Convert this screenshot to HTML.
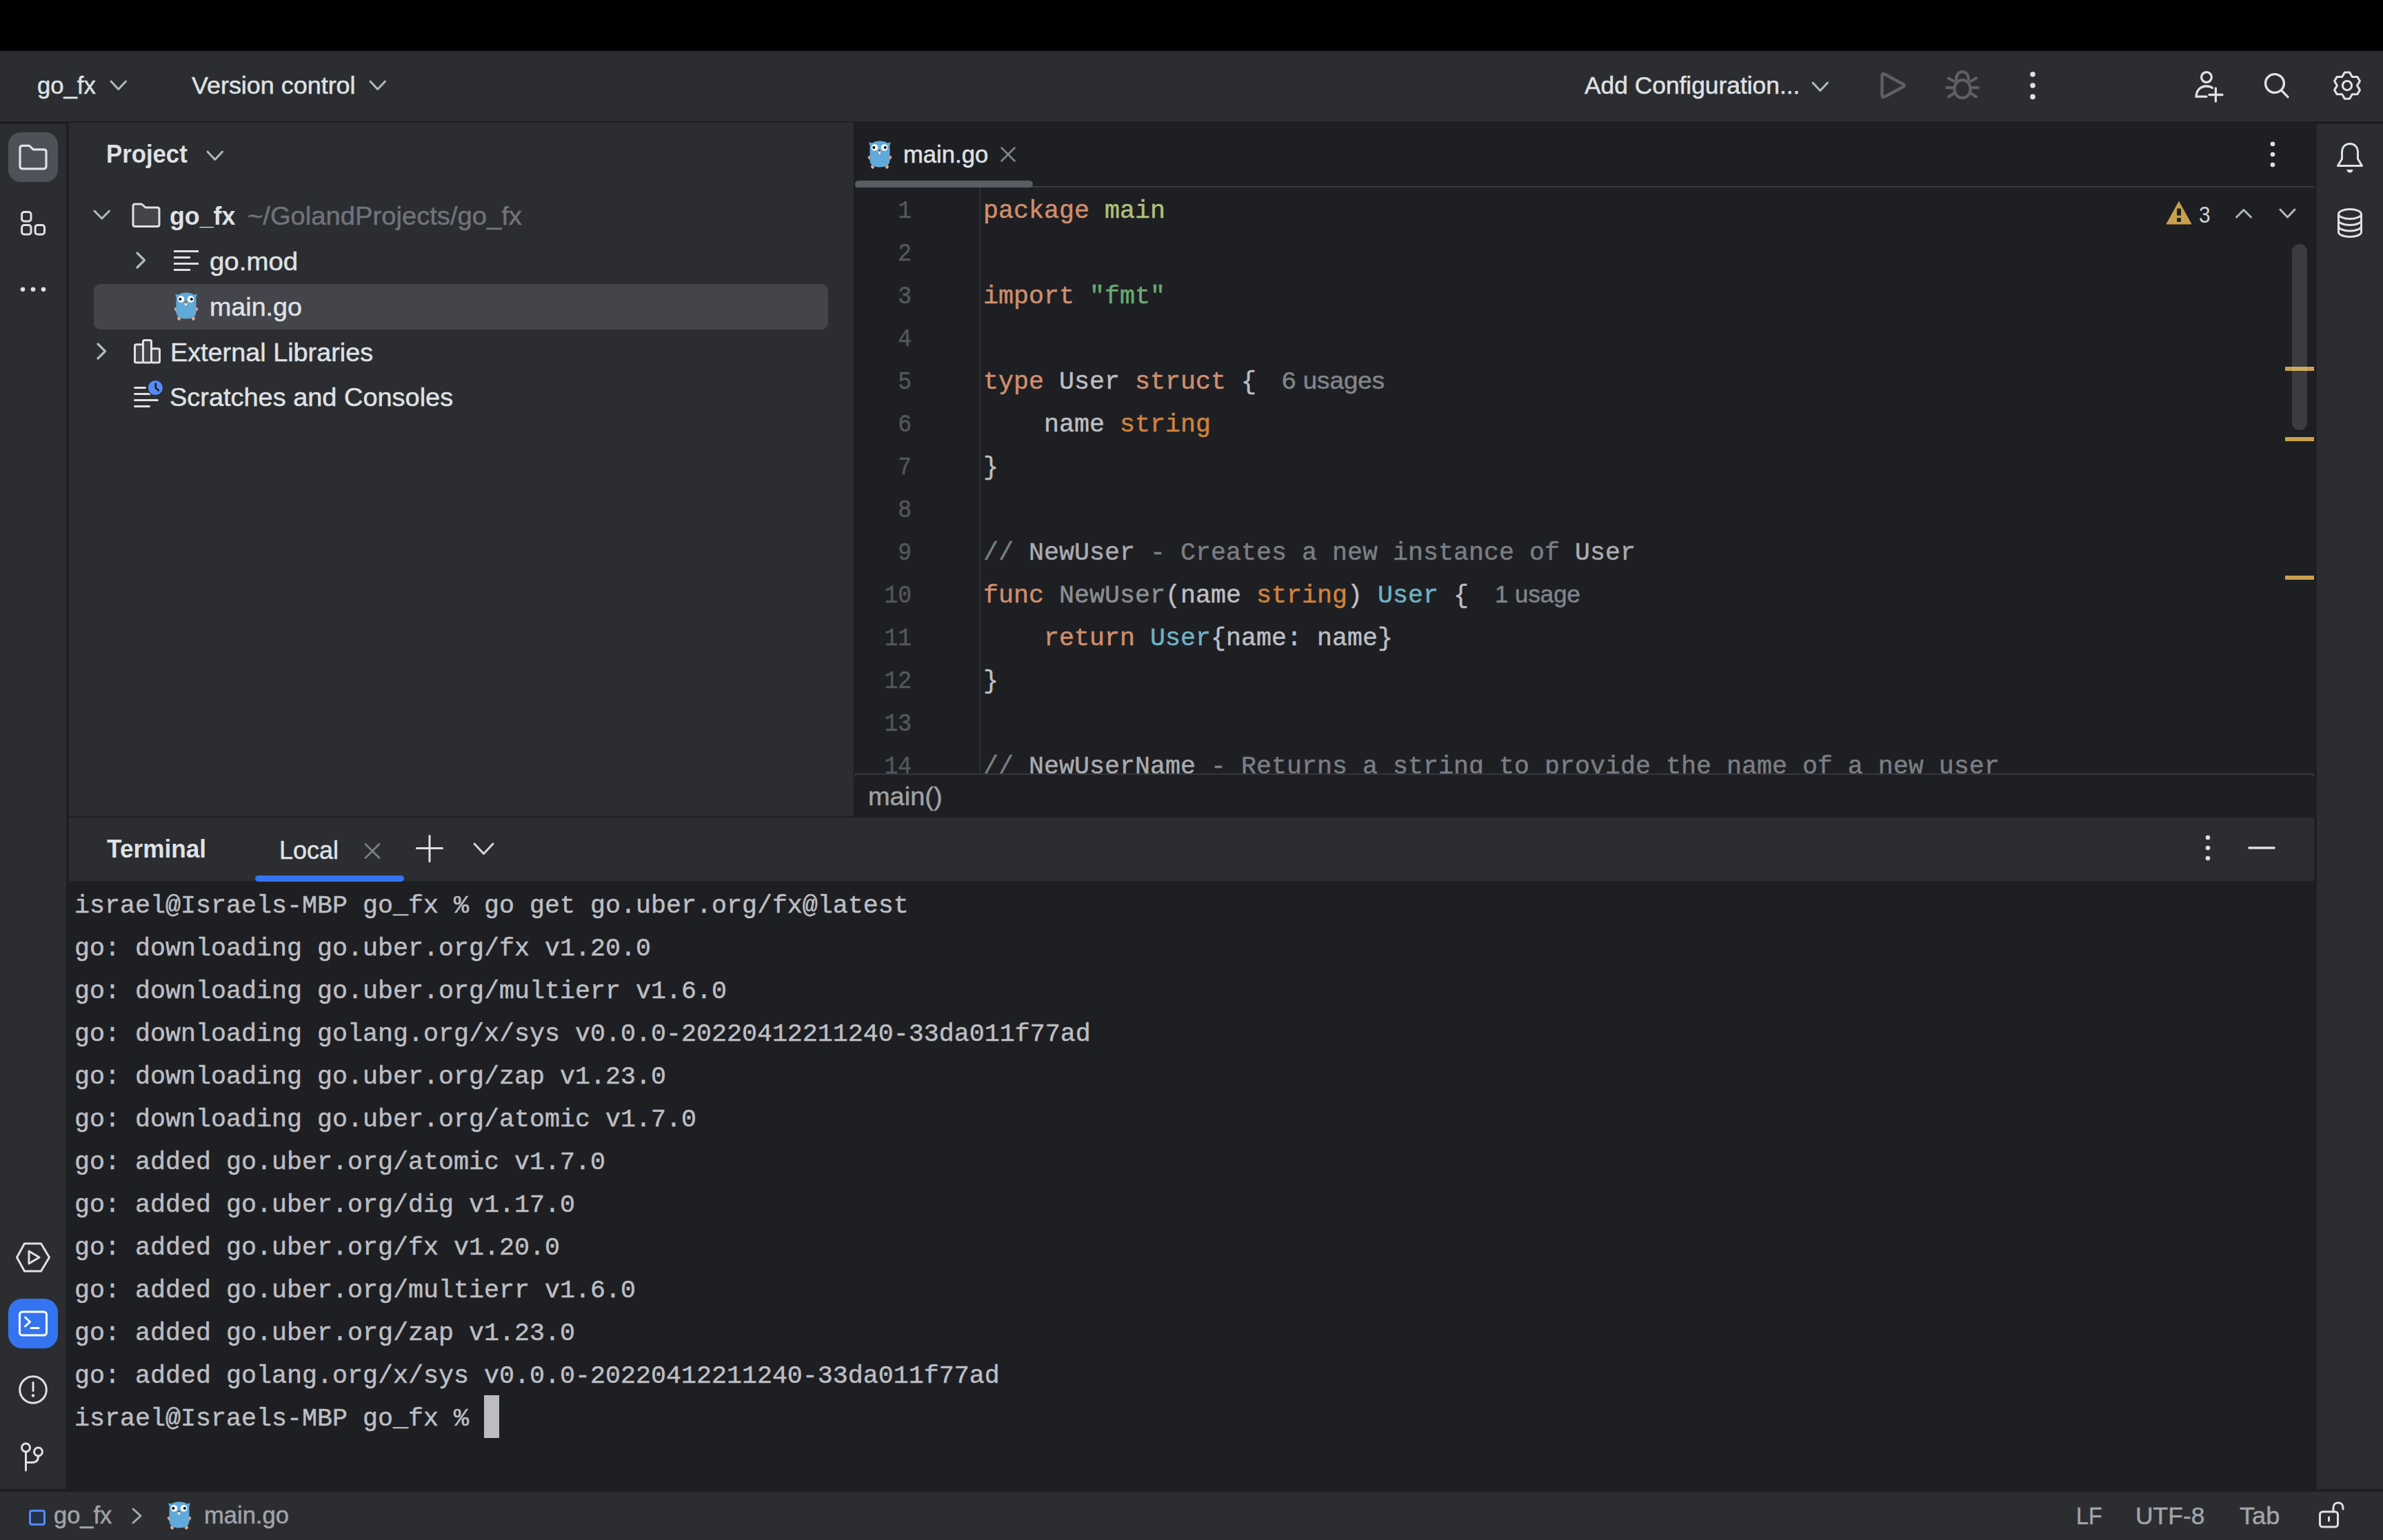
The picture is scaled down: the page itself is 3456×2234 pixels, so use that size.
<!DOCTYPE html><html><head><meta charset="utf-8"><style>
html,body{margin:0;padding:0;width:3456px;height:2234px;overflow:hidden;background:#1E1F22;}
div{box-sizing:border-box;-webkit-text-stroke:0.5px currentColor;}
.nb{-webkit-text-stroke:0;}
</style></head><body>
<div style="position:absolute;left:0px;top:0px;width:3456px;height:74px;background:#000000;border-radius:0px;"></div>
<div style="position:absolute;left:0px;top:74px;width:3456px;height:102px;background:#2B2D30;border-radius:0px;"></div>
<div style="position:absolute;left:0px;top:180px;width:96px;height:1980px;background:#2B2D30;border-radius:0px;"></div>
<div style="position:absolute;left:100px;top:178px;width:1138px;height:1006px;background:#2B2D30;border-radius:0px;"></div>
<div style="position:absolute;left:100px;top:1186px;width:3256px;height:92px;background:#2B2D30;border-radius:0px;"></div>
<div style="position:absolute;left:3360px;top:180px;width:96px;height:1980px;background:#2B2D30;border-radius:0px;"></div>
<div style="position:absolute;left:0px;top:2164px;width:3456px;height:70px;background:#2B2D30;border-radius:0px;"></div>
<div style="position:absolute;left:53.91px;top:93.1px;font-family:'Liberation Sans', sans-serif;font-size:35px;font-weight:normal;line-height:62px;color:#DFE1E5;white-space:pre;transform:scaleX(0.9893);transform-origin:0 0;">go_fx</div>
<svg style="position:absolute;left:157px;top:114px" width="29" height="19" viewBox="0 0 29 19" fill="none"><polyline points="4,4 14.75,15.5 25.5,4" stroke="#B4B8BF" stroke-width="3" stroke-linecap="round" stroke-linejoin="round"/></svg>
<div style="position:absolute;left:278.0px;top:93.1px;font-family:'Liberation Sans', sans-serif;font-size:35px;font-weight:normal;line-height:62px;color:#DFE1E5;white-space:pre;transform:scaleX(1.0261);transform-origin:0 0;">Version control</div>
<svg style="position:absolute;left:533px;top:114px" width="29" height="19" viewBox="0 0 29 19" fill="none"><polyline points="4,4 14.75,15.5 25.5,4" stroke="#B4B8BF" stroke-width="3" stroke-linecap="round" stroke-linejoin="round"/></svg>
<div style="position:absolute;left:2298.0px;top:93.1px;font-family:'Liberation Sans', sans-serif;font-size:35px;font-weight:normal;line-height:62px;color:#DFE1E5;white-space:pre;transform:scaleX(1.0098);transform-origin:0 0;">Add Configuration...</div>
<svg style="position:absolute;left:2625px;top:116px" width="29" height="19" viewBox="0 0 29 19" fill="none"><polyline points="4,4 14.75,15.5 25.5,4" stroke="#B4B8BF" stroke-width="3" stroke-linecap="round" stroke-linejoin="round"/></svg>
<svg style="position:absolute;left:2720px;top:98px" width="50" height="52" viewBox="0 0 50 52" fill="none"><path d="M9.5 12 Q9.5 7.5 13.5 9.8 L40 24 Q43.5 26 40 28 L13.5 42.2 Q9.5 44.5 9.5 40 Z" stroke="#5F6064" stroke-width="4.4" stroke-linejoin="round"/></svg>
<svg style="position:absolute;left:2818px;top:98px" width="56" height="52" viewBox="0 0 56 52" fill="none"><g stroke="#5F6064" stroke-width="4.2" stroke-linecap="round" fill="none">
<ellipse cx="28" cy="31.1" rx="11.7" ry="13"/>
<path d="M19 18 C19 10 23 6.2 28 6.2 C33 6.2 37 10 37 18"/>
<line x1="15.4" y1="19.8" x2="7.9" y2="15.4"/><line x1="40.6" y1="19.8" x2="48.1" y2="15.4"/>
<line x1="14.2" y1="29.2" x2="5.4" y2="29.2"/><line x1="41.8" y1="29.2" x2="50.6" y2="29.2"/>
<line x1="15.4" y1="37.4" x2="7.9" y2="42.4"/><line x1="40.6" y1="37.4" x2="48.1" y2="42.4"/>
</g></svg>
<svg style="position:absolute;left:2938px;top:98px" width="20" height="52" viewBox="0 0 20 52" fill="none"><circle cx="10" cy="9.7" r="3.8" fill="#DFE1E5"/><circle cx="10" cy="26" r="3.8" fill="#DFE1E5"/><circle cx="10" cy="42.4" r="3.8" fill="#DFE1E5"/></svg>
<svg style="position:absolute;left:3176px;top:98px" width="52" height="52" viewBox="0 0 52 52" fill="none"><g stroke="#DFE1E5" stroke-width="3.3" stroke-linecap="round" fill="none">
<circle cx="24" cy="14" r="7.4"/>
<path d="M24 42.2 L9.2 42.2 C9.2 33 15.5 27 24 27 C28 27 30.5 28 32.5 29.5"/>
<line x1="37.4" y1="30" x2="37.4" y2="49"/><line x1="28" y1="39.5" x2="47" y2="39.5"/>
</g></svg>
<svg style="position:absolute;left:3276px;top:98px" width="52" height="52" viewBox="0 0 52 52" fill="none"><g stroke="#DFE1E5" stroke-width="3.4" stroke-linecap="round" fill="none">
<circle cx="23" cy="23" r="13.4"/><line x1="33.2" y1="33.6" x2="42" y2="42.6"/>
</g></svg>
<svg style="position:absolute;left:3376px;top:98px" width="56" height="54" viewBox="0 0 56 54" fill="none"><g stroke="#DFE1E5" stroke-width="3.1" stroke-linejoin="round" fill="none">
<path d="M24.45 6.93 L31.55 6.93 L35.30 13.46 L42.83 13.44 L46.38 19.59 L42.60 26.10 L46.38 32.61 L42.83 38.76 L35.30 38.74 L31.55 45.27 L24.45 45.27 L20.70 38.74 L13.17 38.76 L9.62 32.61 L13.40 26.10 L9.62 19.59 L13.17 13.44 L20.70 13.46 Z"/>
<circle cx="28" cy="26.1" r="6.6"/>
</g></svg>
<div style="position:absolute;left:12px;top:192px;width:72px;height:72px;background:#4E5157;border-radius:18px;"></div>
<svg style="position:absolute;left:24px;top:206px" width="48" height="44" viewBox="0 0 48 44" fill="none"><path d="M5 8.8 C5 6.5 6 5.3 8.5 5.3 L18.5 5.3 L24.2 10.9 L39.5 10.9 C42 10.9 43 12 43 14.3 L43 35.3 C43 37.8 42 38.8 39.5 38.8 L8.5 38.8 C6 38.8 5 37.8 5 35.3 Z" stroke="#DFE1E5" stroke-width="3.2" stroke-linejoin="round"/></svg>
<svg style="position:absolute;left:24px;top:300px" width="48" height="48" viewBox="0 0 48 48" fill="none"><g stroke="#DFE1E5" stroke-width="3" fill="none">
<rect x="7.6" y="7.5" width="13.4" height="13.4" rx="3.5"/>
<rect x="7.6" y="26.5" width="13.4" height="13.4" rx="3.5"/>
<rect x="27.1" y="26.5" width="13.4" height="13.4" rx="3.5"/>
</g></svg>
<svg style="position:absolute;left:24px;top:410px" width="48" height="20" viewBox="0 0 48 20" fill="none"><circle cx="9" cy="9.8" r="3.3" fill="#DFE1E5"/><circle cx="24" cy="9.8" r="3.3" fill="#DFE1E5"/><circle cx="39" cy="9.8" r="3.3" fill="#DFE1E5"/></svg>
<svg style="position:absolute;left:20px;top:1798px" width="56" height="52" viewBox="0 0 56 52" fill="none"><g stroke="#DFE1E5" stroke-width="3" stroke-linejoin="round" fill="none">
<path d="M15.5 6 L39.5 6 L51.5 26 L39.5 46 L15.5 46 L4.5 26 Z"/>
<path d="M22 17 L22 35 L37 26 Z"/>
</g></svg>
<div style="position:absolute;left:12px;top:1884px;width:72px;height:72px;background:#3574F0;border-radius:20px;"></div>
<svg style="position:absolute;left:24px;top:1896px" width="48" height="48" viewBox="0 0 48 48" fill="none"><g stroke="#FFFFFF" stroke-width="3" stroke-linecap="round" stroke-linejoin="round" fill="none">
<rect x="4.5" y="7" width="39" height="34" rx="4"/>
<polyline points="12.5,15 19.5,21.5 12.5,28"/>
<line x1="21" y1="30.5" x2="32" y2="30.5"/>
</g></svg>
<svg style="position:absolute;left:24px;top:1992px" width="48" height="48" viewBox="0 0 48 48" fill="none"><g stroke="#DFE1E5" stroke-width="3" stroke-linecap="round" fill="none">
<circle cx="24" cy="24" r="19.3"/><line x1="24" y1="13.5" x2="24" y2="25.5"/>
</g><circle cx="24" cy="32.5" r="2.2" fill="#DFE1E5"/></svg>
<svg style="position:absolute;left:24px;top:2088px" width="48" height="50" viewBox="0 0 48 50" fill="none"><g stroke="#DFE1E5" stroke-width="3" stroke-linecap="round" fill="none">
<circle cx="13.5" cy="12" r="6"/><circle cx="31.5" cy="18" r="6"/>
<line x1="13.5" y1="18" x2="13.5" y2="45"/>
<path d="M31.5 24 C31.5 30 29 33.5 23 33.5 L13.5 33.5"/>
</g></svg>
<div class="nb" style="position:absolute;left:153.54px;top:193px;font-family:'Liberation Sans', sans-serif;font-size:36px;font-weight:bold;line-height:62px;color:#DFE1E5;white-space:pre;transform:scaleX(0.9645);transform-origin:0 0;">Project</div>
<svg style="position:absolute;left:297px;top:216px" width="29" height="19" viewBox="0 0 29 19" fill="none"><polyline points="4,4 14.75,15.5 25.5,4" stroke="#B4B8BF" stroke-width="3" stroke-linecap="round" stroke-linejoin="round"/></svg>
<svg style="position:absolute;left:133px;top:302px" width="29" height="19" viewBox="0 0 29 19" fill="none"><polyline points="4,4 14.75,15 25.5,4" stroke="#B4B8BF" stroke-width="3" stroke-linecap="round" stroke-linejoin="round"/></svg>
<svg style="position:absolute;left:188px;top:290px" width="48" height="44" viewBox="0 0 48 44" fill="none"><path d="M5 9 C5 7 6 6 8 6 L17.5 6 L23 11 L40 11 C42 11 43 12 43 14 L43 35.5 C43 37.5 42 38.5 40 38.5 L8 38.5 C6 38.5 5 37.5 5 35.5 Z" fill="#43454A" stroke="#DFE1E5" stroke-width="3" stroke-linejoin="round"/></svg>
<div class="nb" style="position:absolute;left:245.63px;top:283.4px;font-family:'Liberation Sans', sans-serif;font-size:37px;font-weight:bold;line-height:62px;color:#DFE1E5;white-space:pre;transform:scaleX(0.9670);transform-origin:0 0;">go_fx</div>
<div style="position:absolute;left:359.47px;top:283.4px;font-family:'Liberation Sans', sans-serif;font-size:37px;font-weight:normal;line-height:62px;color:#6F737A;white-space:pre;transform:scaleX(1.0319);transform-origin:0 0;">~/GolandProjects/go_fx</div>
<svg style="position:absolute;left:195px;top:363px" width="18" height="29" viewBox="0 0 18 29" fill="none"><polyline points="4,4 14.5,14.5 4,25" stroke="#B4B8BF" stroke-width="3.2" stroke-linecap="round" stroke-linejoin="round"/></svg>
<svg style="position:absolute;left:248px;top:358px" width="44" height="40" viewBox="0 0 44 40" fill="none"><g stroke="#DFE1E5" stroke-width="3" fill="none">
<line x1="4" y1="6.5" x2="40" y2="6.5"/><line x1="4" y1="15.5" x2="28" y2="15.5"/>
<line x1="4" y1="24.5" x2="40" y2="24.5"/><line x1="4" y1="33.5" x2="28" y2="33.5"/>
</g></svg>
<div style="position:absolute;left:303.66px;top:349.1px;font-family:'Liberation Sans', sans-serif;font-size:37px;font-weight:normal;line-height:62px;color:#DFE1E5;white-space:pre;transform:scaleX(1.0380);transform-origin:0 0;">go.mod</div>
<div style="position:absolute;left:136px;top:412px;width:1065px;height:66px;background:#43454A;border-radius:10px;"></div>
<svg style="position:absolute;left:252px;top:424px" width="36" height="41" viewBox="0 0 36 41" fill="none"><g>
<path d="M2.2 2.6 L10.5 4.2 L4.5 11 Z" fill="#61A9D9"/>
<path d="M33.8 2.6 L25.5 4.2 L31.5 11 Z" fill="#61A9D9"/>
<ellipse cx="3.8" cy="25" rx="2.4" ry="3.4" transform="rotate(-45 3.8 25)" fill="#E2A98B"/>
<ellipse cx="32.2" cy="25" rx="2.4" ry="3.4" transform="rotate(45 32.2 25)" fill="#E2A98B"/>
<ellipse cx="7.5" cy="38" rx="2.2" ry="2.8" transform="rotate(-25 7.5 38)" fill="#E2A98B"/>
<ellipse cx="28.5" cy="38" rx="2.2" ry="2.8" transform="rotate(25 28.5 38)" fill="#E2A98B"/>
<path d="M3.5 12 C3.5 4 9.5 0.5 18 0.5 C26.5 0.5 32.5 4 32.5 12 L32.5 28 C32.5 35.5 27 38.5 18 38.5 C9 38.5 3.5 35.5 3.5 28 Z" fill="#61A9D9"/>
<circle cx="10.5" cy="10" r="4.8" fill="#fff"/><circle cx="24.6" cy="10" r="4.8" fill="#fff"/>
<circle cx="9.3" cy="10" r="2.1" fill="#000"/><circle cx="25.8" cy="10" r="2.1" fill="#000"/>
<ellipse cx="17.5" cy="15.3" rx="2.5" ry="1.7" fill="#E2A98B"/>
<ellipse cx="17.5" cy="14.3" rx="1.2" ry="0.9" fill="#000"/>
<rect x="16.2" y="16.4" width="2.6" height="2.8" fill="#fff"/>
</g></svg>
<div style="position:absolute;left:303.66px;top:415px;font-family:'Liberation Sans', sans-serif;font-size:37px;font-weight:normal;line-height:62px;color:#DFE1E5;white-space:pre;transform:scaleX(1.0178);transform-origin:0 0;">main.go</div>
<svg style="position:absolute;left:138px;top:495px" width="18" height="29" viewBox="0 0 18 29" fill="none"><polyline points="4,4 14.5,14.5 4,25" stroke="#B4B8BF" stroke-width="3.2" stroke-linecap="round" stroke-linejoin="round"/></svg>
<svg style="position:absolute;left:190px;top:488px" width="48" height="44" viewBox="0 0 48 44" fill="none"><g stroke="#DFE1E5" stroke-width="3" fill="#43454A" stroke-linejoin="round">
<rect x="5.5" y="11.8" width="12" height="26.2" rx="2"/>
<rect x="29.5" y="17.7" width="12" height="20.3" rx="2"/>
<rect x="17.5" y="5.5" width="12" height="32.5" rx="2"/>
</g></svg>
<div style="position:absolute;left:246.66px;top:481px;font-family:'Liberation Sans', sans-serif;font-size:37px;font-weight:normal;line-height:62px;color:#DFE1E5;white-space:pre;transform:scaleX(1.0214);transform-origin:0 0;">External Libraries</div>
<svg style="position:absolute;left:190px;top:548px" width="50" height="46" viewBox="0 0 50 46" fill="none"><g stroke="#DFE1E5" stroke-width="3" stroke-linecap="round" fill="none">
<line x1="5.5" y1="14.5" x2="20.5" y2="14.5"/><line x1="5.5" y1="23.6" x2="28" y2="23.6"/>
<line x1="5.5" y1="32.5" x2="38.4" y2="32.5"/><line x1="5.5" y1="41.5" x2="26.5" y2="41.5"/>
</g>
<circle cx="35.4" cy="14.5" r="12" fill="#2B2D30"/>
<circle cx="35.4" cy="14.5" r="10.5" fill="#548AF7"/>
<path d="M35.8 8.5 L35.8 14.8 L39.8 18.3" stroke="#1E1F22" stroke-width="2.6" stroke-linecap="round" fill="none"/></svg>
<div style="position:absolute;left:246.47px;top:546px;font-family:'Liberation Sans', sans-serif;font-size:37px;font-weight:normal;line-height:62px;color:#DFE1E5;white-space:pre;transform:scaleX(1.0251);transform-origin:0 0;">Scratches and Consoles</div>
<svg style="position:absolute;left:1258px;top:204px" width="36" height="41" viewBox="0 0 36 41" fill="none"><g>
<path d="M2.2 2.6 L10.5 4.2 L4.5 11 Z" fill="#61A9D9"/>
<path d="M33.8 2.6 L25.5 4.2 L31.5 11 Z" fill="#61A9D9"/>
<ellipse cx="3.8" cy="25" rx="2.4" ry="3.4" transform="rotate(-45 3.8 25)" fill="#E2A98B"/>
<ellipse cx="32.2" cy="25" rx="2.4" ry="3.4" transform="rotate(45 32.2 25)" fill="#E2A98B"/>
<ellipse cx="7.5" cy="38" rx="2.2" ry="2.8" transform="rotate(-25 7.5 38)" fill="#E2A98B"/>
<ellipse cx="28.5" cy="38" rx="2.2" ry="2.8" transform="rotate(25 28.5 38)" fill="#E2A98B"/>
<path d="M3.5 12 C3.5 4 9.5 0.5 18 0.5 C26.5 0.5 32.5 4 32.5 12 L32.5 28 C32.5 35.5 27 38.5 18 38.5 C9 38.5 3.5 35.5 3.5 28 Z" fill="#61A9D9"/>
<circle cx="10.5" cy="10" r="4.8" fill="#fff"/><circle cx="24.6" cy="10" r="4.8" fill="#fff"/>
<circle cx="9.3" cy="10" r="2.1" fill="#000"/><circle cx="25.8" cy="10" r="2.1" fill="#000"/>
<ellipse cx="17.5" cy="15.3" rx="2.5" ry="1.7" fill="#E2A98B"/>
<ellipse cx="17.5" cy="14.3" rx="1.2" ry="0.9" fill="#000"/>
<rect x="16.2" y="16.4" width="2.6" height="2.8" fill="#fff"/>
</g></svg>
<div style="position:absolute;left:1309.77px;top:193.1px;font-family:'Liberation Sans', sans-serif;font-size:35px;font-weight:normal;line-height:62px;color:#DFE1E5;white-space:pre;transform:scaleX(0.9889);transform-origin:0 0;">main.go</div>
<svg style="position:absolute;left:1446px;top:208px" width="32" height="32" viewBox="0 0 32 32" fill="none"><g stroke="#7F838A" stroke-width="2.7" stroke-linecap="round"><line x1="6.5" y1="6.5" x2="25.5" y2="25.5"/><line x1="25.5" y1="6.5" x2="6.5" y2="25.5"/></g></svg>
<div style="position:absolute;left:1240px;top:270px;width:2116px;height:2px;background:#393B40;border-radius:0px;"></div>
<div style="position:absolute;left:1240px;top:262px;width:258px;height:10px;background:#5A5D63;border-radius:5px;"></div>
<svg style="position:absolute;left:3276px;top:198px" width="40" height="52" viewBox="0 0 40 52" fill="none"><circle cx="20" cy="10.9" r="3.3" fill="#DFE1E5"/><circle cx="20" cy="26" r="3.3" fill="#DFE1E5"/><circle cx="20" cy="41" r="3.3" fill="#DFE1E5"/></svg>
<div style="position:absolute;left:1420px;top:272px;width:2px;height:850px;background:#2C2E32;border-radius:0px;"></div>
<div style="position:absolute;left:1238px;top:272px;width:2070px;height:850px;overflow:hidden">
<div style="position:absolute;left:0px;top:3px;width:84px;text-align:right;font-family:'Liberation Mono', monospace;font-size:36.67px;line-height:62px;color:#53575E;white-space:pre;transform:scaleX(0.9);transform-origin:100% 0">1</div>
<div style="position:absolute;left:188px;top:3px;font-family:'Liberation Mono', monospace;font-size:36.67px;line-height:62px;white-space:pre"><span style="color:#CF8E6D">package</span><span style="color:#BCBEC4"> </span><span style="color:#AEC07C">main</span></div>
<div style="position:absolute;left:0px;top:65px;width:84px;text-align:right;font-family:'Liberation Mono', monospace;font-size:36.67px;line-height:62px;color:#53575E;white-space:pre;transform:scaleX(0.9);transform-origin:100% 0">2</div>
<div style="position:absolute;left:188px;top:65px;font-family:'Liberation Mono', monospace;font-size:36.67px;line-height:62px;white-space:pre"></div>
<div style="position:absolute;left:0px;top:127px;width:84px;text-align:right;font-family:'Liberation Mono', monospace;font-size:36.67px;line-height:62px;color:#53575E;white-space:pre;transform:scaleX(0.9);transform-origin:100% 0">3</div>
<div style="position:absolute;left:188px;top:127px;font-family:'Liberation Mono', monospace;font-size:36.67px;line-height:62px;white-space:pre"><span style="color:#CF8E6D">import</span><span style="color:#BCBEC4"> </span><span style="color:#6AAB73">&quot;fmt&quot;</span></div>
<div style="position:absolute;left:0px;top:189px;width:84px;text-align:right;font-family:'Liberation Mono', monospace;font-size:36.67px;line-height:62px;color:#53575E;white-space:pre;transform:scaleX(0.9);transform-origin:100% 0">4</div>
<div style="position:absolute;left:188px;top:189px;font-family:'Liberation Mono', monospace;font-size:36.67px;line-height:62px;white-space:pre"></div>
<div style="position:absolute;left:0px;top:251px;width:84px;text-align:right;font-family:'Liberation Mono', monospace;font-size:36.67px;line-height:62px;color:#53575E;white-space:pre;transform:scaleX(0.9);transform-origin:100% 0">5</div>
<div style="position:absolute;left:188px;top:251px;font-family:'Liberation Mono', monospace;font-size:36.67px;line-height:62px;white-space:pre"><span style="color:#CF8E6D">type</span><span style="color:#BCBEC4"> User </span><span style="color:#CF8E6D">struct</span><span style="color:#BCBEC4"> {</span></div>
<div style="position:absolute;left:0px;top:313px;width:84px;text-align:right;font-family:'Liberation Mono', monospace;font-size:36.67px;line-height:62px;color:#53575E;white-space:pre;transform:scaleX(0.9);transform-origin:100% 0">6</div>
<div style="position:absolute;left:188px;top:313px;font-family:'Liberation Mono', monospace;font-size:36.67px;line-height:62px;white-space:pre"><span style="color:#BCBEC4">    name </span><span style="color:#D0823E">string</span></div>
<div style="position:absolute;left:0px;top:375px;width:84px;text-align:right;font-family:'Liberation Mono', monospace;font-size:36.67px;line-height:62px;color:#53575E;white-space:pre;transform:scaleX(0.9);transform-origin:100% 0">7</div>
<div style="position:absolute;left:188px;top:375px;font-family:'Liberation Mono', monospace;font-size:36.67px;line-height:62px;white-space:pre"><span style="color:#BCBEC4">}</span></div>
<div style="position:absolute;left:0px;top:437px;width:84px;text-align:right;font-family:'Liberation Mono', monospace;font-size:36.67px;line-height:62px;color:#53575E;white-space:pre;transform:scaleX(0.9);transform-origin:100% 0">8</div>
<div style="position:absolute;left:188px;top:437px;font-family:'Liberation Mono', monospace;font-size:36.67px;line-height:62px;white-space:pre"></div>
<div style="position:absolute;left:0px;top:499px;width:84px;text-align:right;font-family:'Liberation Mono', monospace;font-size:36.67px;line-height:62px;color:#53575E;white-space:pre;transform:scaleX(0.9);transform-origin:100% 0">9</div>
<div style="position:absolute;left:188px;top:499px;font-family:'Liberation Mono', monospace;font-size:36.67px;line-height:62px;white-space:pre"><span style="color:#7A7E85">// </span><span style="color:#A9ABB0">NewUser</span><span style="color:#7A7E85"> - Creates a new instance of </span><span style="color:#A9ABB0">User</span></div>
<div style="position:absolute;left:0px;top:561px;width:84px;text-align:right;font-family:'Liberation Mono', monospace;font-size:36.67px;line-height:62px;color:#53575E;white-space:pre;transform:scaleX(0.9);transform-origin:100% 0">10</div>
<div style="position:absolute;left:188px;top:561px;font-family:'Liberation Mono', monospace;font-size:36.67px;line-height:62px;white-space:pre"><span style="color:#CF8E6D">func</span><span style="color:#BCBEC4"> </span><span style="color:#8C8F94">NewUser</span><span style="color:#BCBEC4">(name </span><span style="color:#D0823E">string</span><span style="color:#BCBEC4">) </span><span style="color:#6FB1C4">User</span><span style="color:#BCBEC4"> {</span></div>
<div style="position:absolute;left:0px;top:623px;width:84px;text-align:right;font-family:'Liberation Mono', monospace;font-size:36.67px;line-height:62px;color:#53575E;white-space:pre;transform:scaleX(0.9);transform-origin:100% 0">11</div>
<div style="position:absolute;left:188px;top:623px;font-family:'Liberation Mono', monospace;font-size:36.67px;line-height:62px;white-space:pre"><span style="color:#BCBEC4">    </span><span style="color:#CF8E6D">return</span><span style="color:#BCBEC4"> </span><span style="color:#6FB1C4">User</span><span style="color:#BCBEC4">{name: name}</span></div>
<div style="position:absolute;left:0px;top:685px;width:84px;text-align:right;font-family:'Liberation Mono', monospace;font-size:36.67px;line-height:62px;color:#53575E;white-space:pre;transform:scaleX(0.9);transform-origin:100% 0">12</div>
<div style="position:absolute;left:188px;top:685px;font-family:'Liberation Mono', monospace;font-size:36.67px;line-height:62px;white-space:pre"><span style="color:#BCBEC4">}</span></div>
<div style="position:absolute;left:0px;top:747px;width:84px;text-align:right;font-family:'Liberation Mono', monospace;font-size:36.67px;line-height:62px;color:#53575E;white-space:pre;transform:scaleX(0.9);transform-origin:100% 0">13</div>
<div style="position:absolute;left:188px;top:747px;font-family:'Liberation Mono', monospace;font-size:36.67px;line-height:62px;white-space:pre"></div>
<div style="position:absolute;left:0px;top:809px;width:84px;text-align:right;font-family:'Liberation Mono', monospace;font-size:36.67px;line-height:62px;color:#53575E;white-space:pre;transform:scaleX(0.9);transform-origin:100% 0">14</div>
<div style="position:absolute;left:188px;top:809px;font-family:'Liberation Mono', monospace;font-size:36.67px;line-height:62px;white-space:pre"><span style="color:#7A7E85">// </span><span style="color:#A9ABB0">NewUserName</span><span style="color:#7A7E85"> - Returns a string to provide the name of a new user</span></div>
</div>
<div style="position:absolute;left:1858.95px;top:521px;font-family:'Liberation Sans', sans-serif;font-size:35px;font-weight:normal;line-height:62px;color:#80848C;white-space:pre;transform:scaleX(1.0500);transform-origin:0 0;">6 usages</div>
<div style="position:absolute;left:2167.71px;top:831px;font-family:'Liberation Sans', sans-serif;font-size:35px;font-weight:normal;line-height:62px;color:#80848C;white-space:pre;transform:scaleX(0.9943);transform-origin:0 0;">1 usage</div>
<svg style="position:absolute;left:3138px;top:288px" width="44" height="40" viewBox="0 0 44 40" fill="none"><path d="M22 4.5 L40 37 L4 37 Z" fill="#C9A04B" stroke="#C9A04B" stroke-width="1" stroke-linejoin="round"/><rect x="19.1" y="14.5" width="5.9" height="10.1" fill="#1E1F22"/><rect x="19.1" y="28.1" width="5.9" height="5.8" fill="#1E1F22"/></svg>
<div class="nb" style="position:absolute;left:3188.99px;top:280.7px;font-family:'Liberation Sans', sans-serif;font-size:33px;font-weight:normal;line-height:62px;color:#CED0D6;white-space:pre;transform:scaleX(0.9059);transform-origin:0 0;">3</div>
<svg style="position:absolute;left:3238px;top:298px" width="32" height="24" viewBox="0 0 32 24" fill="none"><polyline points="5.5,17 16,6.5 26.5,17" stroke="#B4B8BF" stroke-width="3" stroke-linecap="round" stroke-linejoin="round"/></svg>
<svg style="position:absolute;left:3303px;top:300px" width="29" height="19" viewBox="0 0 29 19" fill="none"><polyline points="4,4 14.5,15 25,4" stroke="#B4B8BF" stroke-width="3" stroke-linecap="round" stroke-linejoin="round"/></svg>
<div style="position:absolute;left:3314px;top:532px;width:42px;height:6px;background:#C9A04B;border-radius:0px;"></div>
<div style="position:absolute;left:3314px;top:634px;width:42px;height:6px;background:#C9A04B;border-radius:0px;"></div>
<div style="position:absolute;left:3314px;top:835px;width:42px;height:6px;background:#C9A04B;border-radius:0px;"></div>
<div style="position:absolute;left:3324px;top:354px;width:22px;height:270px;background:rgba(255,255,255,0.135);border-radius:11px;"></div>
<div style="position:absolute;left:1240px;top:1122px;width:2116px;height:2px;background:#35373C;border-radius:0px;"></div>
<div style="position:absolute;left:1240px;top:1122px;width:2px;height:4px;background:#35373C;border-radius:0px;"></div>
<div style="position:absolute;left:3354px;top:1122px;width:2px;height:4px;background:#35373C;border-radius:0px;"></div>
<div style="position:absolute;left:1259.49px;top:1125px;font-family:'Liberation Sans', sans-serif;font-size:36px;font-weight:normal;line-height:62px;color:#9FA2A8;white-space:pre;transform:scaleX(1.0545);transform-origin:0 0;">main()</div>
<div class="nb" style="position:absolute;left:154.8px;top:1201.3px;font-family:'Liberation Sans', sans-serif;font-size:36px;font-weight:bold;line-height:62px;color:#DFE1E5;white-space:pre;transform:scaleX(0.9781);transform-origin:0 0;">Terminal</div>
<div style="position:absolute;left:405.0px;top:1202.5px;font-family:'Liberation Sans', sans-serif;font-size:36px;font-weight:normal;line-height:62px;color:#DFE1E5;white-space:pre;transform:scaleX(1.0000);transform-origin:0 0;">Local</div>
<svg style="position:absolute;left:524px;top:1218px" width="32" height="32" viewBox="0 0 32 32" fill="none"><g stroke="#7A7E85" stroke-width="2.8" stroke-linecap="round"><line x1="6" y1="6.5" x2="26" y2="26.5"/><line x1="26" y1="6.5" x2="6" y2="26.5"/></g></svg>
<div style="position:absolute;left:370px;top:1270px;width:216px;height:9px;background:#3574F0;border-radius:4.5px;"></div>
<svg style="position:absolute;left:599px;top:1207px" width="48" height="48" viewBox="0 0 48 48" fill="none"><g stroke="#DFE1E5" stroke-width="3" stroke-linecap="round"><line x1="24" y1="5.5" x2="24" y2="42.5"/><line x1="5.5" y1="23.5" x2="42.5" y2="23.5"/></g></svg>
<svg style="position:absolute;left:684px;top:1220px" width="35" height="22" viewBox="0 0 35 22" fill="none"><polyline points="4,4 17.5,18.5 31,4" stroke="#D5D7DB" stroke-width="3" stroke-linecap="round" stroke-linejoin="round"/></svg>
<svg style="position:absolute;left:3188px;top:1204px" width="28" height="52" viewBox="0 0 28 52" fill="none"><circle cx="14" cy="11" r="3.3" fill="#DFE1E5"/><circle cx="14" cy="26" r="3.3" fill="#DFE1E5"/><circle cx="14" cy="41" r="3.3" fill="#DFE1E5"/></svg>
<svg style="position:absolute;left:3252px;top:1220px" width="56" height="20" viewBox="0 0 56 20" fill="none"><line x1="10" y1="10" x2="46" y2="10" stroke="#DFE1E5" stroke-width="3.6" stroke-linecap="round"/></svg>
<div style="position:absolute;left:108px;top:1283px;font-family:'Liberation Mono', monospace;font-size:36.67px;line-height:62px;color:#BCBEC4;white-space:pre">israel@Israels-MBP go_fx % go get go.uber.org/fx@latest
go: downloading go.uber.org/fx v1.20.0
go: downloading go.uber.org/multierr v1.6.0
go: downloading golang.org/x/sys v0.0.0-20220412211240-33da011f77ad
go: downloading go.uber.org/zap v1.23.0
go: downloading go.uber.org/atomic v1.7.0
go: added go.uber.org/atomic v1.7.0
go: added go.uber.org/dig v1.17.0
go: added go.uber.org/fx v1.20.0
go: added go.uber.org/multierr v1.6.0
go: added go.uber.org/zap v1.23.0
go: added golang.org/x/sys v0.0.0-20220412211240-33da011f77ad
israel@Israels-MBP go_fx % </div>
<div style="position:absolute;left:702px;top:2024px;width:22px;height:62px;background:#BBBDC1;border-radius:0px;"></div>
<div style="position:absolute;left:42px;top:2190px;width:24px;height:23px;background:#25324D;border-radius:4px;border:3px solid #548AF7;"></div>
<div style="position:absolute;left:78.12px;top:2167px;font-family:'Liberation Sans', sans-serif;font-size:35px;font-weight:normal;line-height:62px;color:#A1A4AA;white-space:pre;transform:scaleX(0.9833);transform-origin:0 0;">go_fx</div>
<svg style="position:absolute;left:189px;top:2185px" width="19" height="28" viewBox="0 0 19 28" fill="none"><polyline points="4,4 15,14.0 4,24" stroke="#A8ABB1" stroke-width="3" stroke-linecap="round" stroke-linejoin="round"/></svg>
<svg style="position:absolute;left:242px;top:2178px" width="36" height="41" viewBox="0 0 36 41" fill="none"><g>
<path d="M2.2 2.6 L10.5 4.2 L4.5 11 Z" fill="#61A9D9"/>
<path d="M33.8 2.6 L25.5 4.2 L31.5 11 Z" fill="#61A9D9"/>
<ellipse cx="3.8" cy="25" rx="2.4" ry="3.4" transform="rotate(-45 3.8 25)" fill="#E2A98B"/>
<ellipse cx="32.2" cy="25" rx="2.4" ry="3.4" transform="rotate(45 32.2 25)" fill="#E2A98B"/>
<ellipse cx="7.5" cy="38" rx="2.2" ry="2.8" transform="rotate(-25 7.5 38)" fill="#E2A98B"/>
<ellipse cx="28.5" cy="38" rx="2.2" ry="2.8" transform="rotate(25 28.5 38)" fill="#E2A98B"/>
<path d="M3.5 12 C3.5 4 9.5 0.5 18 0.5 C26.5 0.5 32.5 4 32.5 12 L32.5 28 C32.5 35.5 27 38.5 18 38.5 C9 38.5 3.5 35.5 3.5 28 Z" fill="#61A9D9"/>
<circle cx="10.5" cy="10" r="4.8" fill="#fff"/><circle cx="24.6" cy="10" r="4.8" fill="#fff"/>
<circle cx="9.3" cy="10" r="2.1" fill="#000"/><circle cx="25.8" cy="10" r="2.1" fill="#000"/>
<ellipse cx="17.5" cy="15.3" rx="2.5" ry="1.7" fill="#E2A98B"/>
<ellipse cx="17.5" cy="14.3" rx="1.2" ry="0.9" fill="#000"/>
<rect x="16.2" y="16.4" width="2.6" height="2.8" fill="#fff"/>
</g></svg>
<div style="position:absolute;left:295.63px;top:2167px;font-family:'Liberation Sans', sans-serif;font-size:35px;font-weight:normal;line-height:62px;color:#A1A4AA;white-space:pre;transform:scaleX(0.9869);transform-origin:0 0;">main.go</div>
<div style="position:absolute;left:3011.16px;top:2167.5px;font-family:'Liberation Sans', sans-serif;font-size:35px;font-weight:normal;line-height:62px;color:#A1A4AA;white-space:pre;transform:scaleX(0.9211);transform-origin:0 0;">LF</div>
<div style="position:absolute;left:3097.47px;top:2167.5px;font-family:'Liberation Sans', sans-serif;font-size:35px;font-weight:normal;line-height:62px;color:#A1A4AA;white-space:pre;transform:scaleX(1.0135);transform-origin:0 0;">UTF-8</div>
<div style="position:absolute;left:3247.6px;top:2167.5px;font-family:'Liberation Sans', sans-serif;font-size:35px;font-weight:normal;line-height:62px;color:#A1A4AA;white-space:pre;transform:scaleX(1.0339);transform-origin:0 0;">Tab</div>
<svg style="position:absolute;left:3358px;top:2174px" width="48" height="46" viewBox="0 0 48 46" fill="none"><g stroke="#DFE1E5" stroke-width="3" stroke-linecap="round" fill="none">
<rect x="6.5" y="19" width="26" height="22" rx="4"/>
<path d="M26 19 L26 13 C26 8.5 29 6 33 6 C37 6 40 8.5 40 13 L40 15"/>
<line x1="19.5" y1="27" x2="19.5" y2="32"/>
</g></svg>
<svg style="position:absolute;left:3384px;top:202px" width="48" height="52" viewBox="0 0 48 52" fill="none"><g stroke="#DFE1E5" stroke-width="3" stroke-linejoin="round" fill="none">
<path d="M6.5 38.5 L12.5 28.5 L12.5 19 C12.5 11 17.5 6.5 24 6.5 C30.5 6.5 35.5 11 35.5 19 L35.5 28.5 L41.5 38.5 Z"/>
</g><path d="M19.5 44 L28.5 44 C28.5 46.5 26.5 48.5 24 48.5 C21.5 48.5 19.5 46.5 19.5 44 Z" fill="#DFE1E5"/></svg>
<svg style="position:absolute;left:3384px;top:298px" width="48" height="52" viewBox="0 0 48 52" fill="none"><g stroke="#DFE1E5" stroke-width="3" fill="none">
<ellipse cx="24" cy="12.5" rx="16.5" ry="7"/>
<path d="M7.5 12.5 L7.5 38.5 C7.5 42.5 15 45.5 24 45.5 C33 45.5 40.5 42.5 40.5 38.5 L40.5 12.5"/>
<path d="M7.5 21.5 C7.5 25.5 15 28.5 24 28.5 C33 28.5 40.5 25.5 40.5 21.5"/>
<path d="M7.5 30 C7.5 34 15 37 24 37 C33 37 40.5 34 40.5 30"/>
</g></svg>
</body></html>
